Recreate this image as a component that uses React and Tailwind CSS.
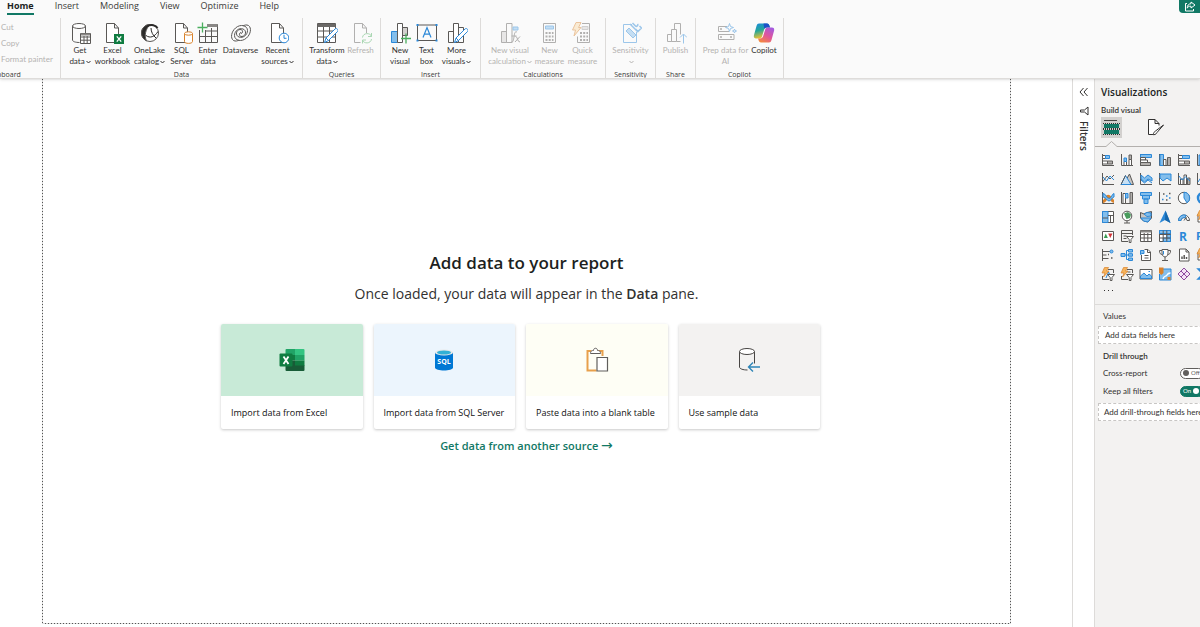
import React from "react";

const INK = "#5a5856";
const BLUE = "#2b88d8";
const SKY = "#83beec";
const GREEN = "#4aae5e";
const ORANGE = "#d9822b";

function Svg({ size = 22, children, className = "" }) {
  return (
    <svg
      width={size}
      height={size}
      viewBox={`0 0 ${size} ${size}`}
      fill="none"
      stroke={INK}
      strokeWidth="1"
      aria-hidden="true"
      className={`shrink-0 ${className}`}
    >
      {children}
    </svg>
  );
}

function Chevron() {
  return (
    <svg width="5" height="4" viewBox="0 0 5 4" fill="none" stroke="currentColor" aria-hidden="true" className="ml-px inline-block">
      <path d="M0.5 1l2 2 2-2" />
    </svg>
  );
}

const Doc = () => <path d="M4.5 1.500h8l4 4.500v14.500h-12zM12.500 1.500v4.500h4" fill="#fff" />;

const Pencil = () => (
  <g>
    <path d="M8.500 20.500l1.500-4.500 9-9c1.500-1.500 4 1 2.500 2.500l-9 9z" fill="#fff" stroke={BLUE} />
    <path d="M10 16l2.500 2.500" stroke={BLUE} />
  </g>
);

const icons = {
  getData: (
    <Svg>
      <path d="M3.500 4v14c0 1.500 3 2.500 7 2.500M16.500 4v7" fill="none" />
      <ellipse cx="10" cy="4" rx="6.500" ry="2.500" fill="#fff" />
      <path d="M11.500 11.500h10v10h-10zM11.500 15h10M11.500 18.200h10M15 14v7.500M18.200 14v7.500" fill="#fff" />
      <path d="M12 12.500h9" strokeWidth="2" stroke="#8a8886" />
    </Svg>
  ),
  excel: (
    <Svg>
      <Doc />
      <rect x="12" y="12" width="10" height="10" fill="#107c41" stroke="none" />
      <path d="M14.800 14.300l4.400 5.400M19.200 14.300l-4.400 5.400" stroke="#fff" strokeWidth="1.300" />
    </Svg>
  ),
  oneLake: (
    <Svg>
      <circle cx="11" cy="11" r="8.500" fill="#fff" />
      <path d="M11 2.500c-5 0-8.500 4-8.500 8.500 0 3.500 2 6.500 5 7.800C5 14 6.500 7 11 2.500z" fill="#2b2a29" />
      <path d="M8 4.500c4-2.500 9-1.500 10.500 1.500" strokeWidth="2" stroke="#2b2a29" />
      <path d="M7 13.500c4 3 8.500 1.500 12-4M12 6c0 4 2 7.500 5 10" stroke="#2b2a29" />
    </Svg>
  ),
  sql: (
    <Svg>
      <Doc />
      <path d="M13.500 11.500v8c0 2.500 8 2.500 8 0v-8" fill="#fff" stroke={ORANGE} />
      <ellipse cx="17.500" cy="11.500" rx="4" ry="1.700" fill="#fff" stroke={ORANGE} />
    </Svg>
  ),
  enter: (
    <Svg>
      <path d="M2.500 8v12.500h18v-18h-10M2.500 14.500h18M8.500 8v12.500M14.500 6v14.500M8 9h12.500" />
      <path d="M10 3.500h10.500" strokeWidth="3" stroke="#8a8886" />
      <path d="M5.500 0.500v10M0.500 5.500h10" stroke={GREEN} strokeWidth="1.300" />
    </Svg>
  ),
  dataverse: (
    <Svg>
      <path d="M18.500 3.500c3.500 2.500 2 9-2 12.500-5 4.500-12 2.500-12-2.500 0-4.500 4.500-8 8.500-6.500 4 1.500 3 7-1 7.500-3 .3-3.500-3.500-1-4" />
      <path d="M3.500 18.500C0 16 1.500 9.500 5.500 6c5-4.500 12-2.500 12 2.500 0 4.500-4.500 8-8.500 6.500-4-1.500-3-7 1-7.500 3-.3 3.500 3.500 1 4" />
      <path d="M3.500 18.500c2 1 4 .5 5.500-.5M18.500 3.500c-2-1-4-.5-5.500.5" />
    </Svg>
  ),
  recent: (
    <Svg>
      <Doc />
      <circle cx="17" cy="16" r="4.800" fill="#fff" stroke={BLUE} />
      <path d="M17 12.800v3.500h2.500" stroke={BLUE} />
    </Svg>
  ),
  transform: (
    <Svg>
      <path d="M1.500 1.500h18v19h-18zM1.500 9h18M1.500 15h18M7.500 5v15.500M13.500 5v15.500" fill="#fff" />
      <path d="M1.500 3.500h18" strokeWidth="3" stroke="#6b6967" />
      <Pencil />
    </Svg>
  ),
  refresh: (
    <Svg>
      <path d="M4.500 1.500h8l4 4.500v5M12.500 1.500v4.500h4M4.500 1.500v19h6" />
      <path d="M12.500 15.500c.5-5 8-5 9-1M21.500 11v3.500h-3.500M21.500 17c-.5 5-8 5-9 1M12.500 21.500v-3.500h3.500" stroke={GREEN} />
    </Svg>
  ),
  newVisual: (
    <Svg>
      <path d="M2.500 9.500h6v11h-6z" fill={SKY} stroke={BLUE} />
      <path d="M13.500 5.500h5v8h-5z" fill="#d2d0ce" />
      <path d="M8.500 1.500h5v19h-5z" fill="#fff" />
      <path d="M17 11.500v10M12 16.500h10" stroke={GREEN} strokeWidth="1.300" />
    </Svg>
  ),
  textBox: (
    <Svg>
      <path d="M1.500 3h19v15.500h-19z" />
      <path d="M7 15.500L11 5.500l4 10M8.500 12.200h5" stroke={BLUE} strokeWidth="1.200" />
      <path d="M0.500 2h2v2h-2zM19.500 2h2v2h-2zM0.500 17.500h2v2h-2zM19.500 17.500h2v2h-2z" fill={BLUE} stroke="none" />
    </Svg>
  ),
  moreVisuals: (
    <Svg>
      <path d="M2.500 9.500h5v11h-5zM12.500 5.500h5v15h-5z" />
      <path d="M7.500 1.500h5v19h-5z" fill="#fff" />
      <Pencil />
    </Svg>
  ),
  newCalc: (
    <Svg>
      <path d="M2.500 9.500h5v11h-5z" fill="#d2d0ce" />
      <path d="M7.500 1.500h5.500v19h-5.500z" />
      <path d="M14 5h5v3h-5z" fill={SKY} stroke={BLUE} />
      <path d="M18 10c-2.500-1-2.500 2-3 5s-1 6-3 5M12.500 14h5M16.500 14.500c2.500 0 1.500 5.500 4.500 5.500M21 14.500l-5 5.500" />
    </Svg>
  ),
  measure: (
    <Svg>
      <path d="M4.500 1.500h12v19h-12z" />
      <path d="M6.500 4h8v3h-8z" fill={SKY} stroke={BLUE} />
      <path d="M6.500 11h8M6.500 14.500h8M6.500 18h8" strokeDasharray="2 1.200" strokeWidth="2" />
    </Svg>
  ),
  quick: (
    <Svg>
      <path d="M10 1.500h7.500v19h-12v-6" />
      <path d="M10 4.500h6v3h-6z" fill="#d2d0ce" stroke="#a19f9d" />
      <path d="M8 11h8M8 14.500h8M8 18h8" strokeDasharray="2 1.200" strokeWidth="2" />
      <path d="M4 .5h5L6.500 5.500H9L2 14l1.500-6H.5z" fill="#fbd9a5" stroke={ORANGE} />
    </Svg>
  ),
  sensitivity: (
    <Svg>
      <path d="M12 2.500H3.500v18h13V10" stroke={BLUE} />
      <path d="M6 9l3-3 7 7-3 3z" fill={SKY} stroke={BLUE} />
      <path d="M10 2l8 8M12.500 1l3 3c1 1 3-.5 2-2M15.500 7l2.500 2.500 3.500-3.500-2-2" stroke={BLUE} strokeWidth="1.500" />
    </Svg>
  ),
  publish: (
    <Svg>
      <path d="M2.500 12.500h4v7h-4zM6.500 7.500h5v12h-5zM9.500 7.500v-6h6v11M11.500 19.500h4" />
      <path d="M18.500 21.500v-9M15 15.500l3.500-3.500 3.500 3.500" stroke={BLUE} />
    </Svg>
  ),
  prep: (
    <Svg>
      <path d="M12 4.500H3.500v5H14M3.500 12.500h15.500v5H3.500z" />
      <path d="M5 7h2M5 15h2M15 15h2" strokeWidth="1.500" />
      <path d="M14.500 1.500l1 3 3 1-3 1-1 3-1-3-3-1 3-1zM19.500 7l.5 1.500 1.500.5-1.500.5-.5 1.500-.5-1.500-1.500-.5 1.500-.5z" stroke={BLUE} />
    </Svg>
  ),
  copilot: (
    <Svg>
      <defs>
        <linearGradient id="cpA" x1="0" y1="0" x2="0.300" y2="1">
          <stop offset="0" stopColor="#1b8ae0" />
          <stop offset="0.500" stopColor="#23a69a" />
          <stop offset="1" stopColor="#f2c230" />
        </linearGradient>
        <linearGradient id="cpB" x1="0.800" y1="0" x2="0.200" y2="1">
          <stop offset="0" stopColor="#a35be0" />
          <stop offset="0.500" stopColor="#e0559b" />
          <stop offset="1" stopColor="#f58a3c" />
        </linearGradient>
      </defs>
      <path d="M6 1.500h8c1.500 0 2 1 2.500 2.500l.5 1.500h-3c-2 0-2.500 1-3 2.500l-2 6.500c-.5 1.500-1.200 2-3 2H3c-2 0-2.500-1.500-2-3.500L3.500 4C4 2.300 4.700 1.500 6 1.500z" fill="url(#cpA)" stroke="none" />
      <path d="M10.500 1.500H14c1.500 0 2 1 2.500 2.500l.5 1.500h-3c-1.500 0-2.200.5-2.700 1.500z" fill="#1c50c8" stroke="none" />
      <path d="M16 20.500H8c-1.500 0-2-1-2.500-2.500L5 16.500h2c2 0 2.700-1 3.200-2.500l2-6.500c.5-1.500 1.200-2 3-2H19c2 0 2.500 1.500 2 3.500L18.500 18c-.5 1.700-1.200 2.500-2.500 2.500z" fill="url(#cpB)" stroke="none" />
    </Svg>
  ),
};

const groups = [
  {
    name: "Data",
    pad: "pl-[5px] pr-[7px]",
    items: [
      ["getData", ["Get", "data"], "w-7", true],
      ["excel", ["Excel", "workbook"], "w-[37px]"],
      ["oneLake", ["OneLake", "catalog"], "w-[37px]", true],
      ["sql", ["SQL", "Server"], "w-[27px]"],
      ["enter", ["Enter", "data"], "w-[26px]"],
      ["dataverse", ["Dataverse"], "w-[39px]"],
      ["recent", ["Recent", "sources"], "w-[35px]", true],
    ],
  },
  {
    name: "Queries",
    pad: "pl-[6px] pr-[4px]",
    items: [
      ["transform", ["Transform", "data"], "w-9", true],
      ["refresh", ["Refresh"], "w-[31px]", false, true],
    ],
  },
  {
    name: "Insert",
    pad: "pl-[6px] pr-[7px]",
    items: [
      ["newVisual", ["New", "visual"], "w-[26px]"],
      ["textBox", ["Text", "box"], "w-[27px]"],
      ["moreVisuals", ["More", "visuals"], "w-[33px]", true],
    ],
  },
  {
    name: "Calculations",
    pad: "px-[6px]",
    items: [
      ["newCalc", ["New visual", "calculation"], "w-[46px]", true, true],
      ["measure", ["New", "measure"], "w-[33px]", false, true],
      ["quick", ["Quick", "measure"], "w-[33px]", false, true],
    ],
  },
  { name: "Sensitivity", pad: "px-[6px]", items: [["sensitivity", ["Sensitivity", ""], "w-[37px]", true, true]] },
  { name: "Share", pad: "px-[6px]", items: [["publish", ["Publish"], "w-[27px]", false, true]] },
  {
    name: "Copilot",
    pad: "px-[5px]",
    items: [
      ["prep", ["Prep data for", "AI"], "w-[49px]", false, true],
      ["copilot", ["Copilot"], "w-7"],
    ],
  },
];

function RibbonButton({ item }) {
  const [icon, lines, width, menu, off] = item;
  return (
    <button type="button" disabled={off} className={`flex flex-col items-center ${width} ${off ? "text-[#b5b3b1]" : "text-[#323130]"}`}>
      <span className={`mb-px ${off ? "opacity-45" : ""}`}>{icons[icon]}</span>
      {lines.map((line, i) => (
        <span key={i} className="h-[11px] font-[Lato,sans-serif] text-[8px] leading-[11px] whitespace-nowrap">
          {line}
          {menu && i === lines.length - 1 && <Chevron />}
        </span>
      ))}
    </button>
  );
}

function Ribbon() {
  return (
    <header className="relative z-10 flex h-[79px] shrink-0 flex-col overflow-hidden border-b border-[#dedcda] bg-[#fafafa] shadow-sm">
      <div className="flex h-[18px] items-start">
        <nav className="flex gap-[21px] pl-[7px] text-[9px] leading-[12px] text-[#3b3a39]">
          {["Home", "Insert", "Modeling", "View", "Optimize", "Help"].map((tab, i) => (
            <a
              key={tab}
              href={`#${tab.toLowerCase()}`}
              className={i === 0 ? "border-b-2 border-[#117865] pb-px font-bold text-[#201f1e]" : ""}
            >
              {tab}
            </a>
          ))}
        </nav>
        <button type="button" aria-label="Share" className="ml-auto flex h-[13px] w-[21px] items-center justify-center rounded-bl-sm bg-[#117865]">
          <svg width="12" height="11" viewBox="0 0 12 11" fill="none" stroke="#fff" aria-hidden="true">
            <path d="M3 2.500H1.500v7.500h8V8M7 1l4 3-4 3V5.200C5 5 3.800 5.800 3.200 7.200 3.200 4.500 4.500 2.800 7 2.700z" />
          </svg>
        </button>
      </div>
      <div className="flex flex-1">
        <section className="-ml-[50px] flex w-[111px] flex-col border-r border-[#dddbd9]">
          <div className="flex flex-1 flex-col items-start pt-px pl-[51px] font-[Lato,sans-serif] text-[8px] leading-[16px] text-[#b5b3b1]">
            {["Cut", "Copy", "Format painter"].map((t) => (
              <button key={t} type="button" disabled className="whitespace-nowrap">
                {t}
              </button>
            ))}
          </div>
          <h2 className="text-center text-[7px] leading-[7px] text-[#3b3a39]">Clipboard</h2>
        </section>
        {groups.map((g) => (
          <section key={g.name} className="flex flex-col border-r border-[#dddbd9]">
            <div className={`flex flex-1 items-start pt-1 ${g.pad}`}>
              {g.items.map((item) => (
                <RibbonButton key={item[0]} item={item} />
              ))}
            </div>
            <h2 className="text-center text-[7px] leading-[7px] text-[#3b3a39]">{g.name}</h2>
          </section>
        ))}
      </div>
    </header>
  );
}

const cards = [
  {
    label: "Import data from Excel",
    tone: "bg-[#c8ead7]",
    icon: (
      <svg width="26" height="24" viewBox="0 0 26 24" aria-hidden="true">
        <path d="M7.500 1h9v11h-10V2a1 1 0 0 1 1-1z" fill="#21a366" />
        <path d="M16 1h8.500a1 1 0 0 1 1 1v5H16z" fill="#33c481" />
        <path d="M6.500 7H16v5.500H6.500z" fill="#107c41" />
        <path d="M16 7h9.500v5.500H16z" fill="#21a366" />
        <path d="M6.500 12.500H16V18H6.500z" fill="#185c37" />
        <path d="M16 12.500h9.500V18H16z" fill="#107c41" />
        <path d="M6.500 17.500h19V22a1 1 0 0 1-1 1h-17a1 1 0 0 1-1-1z" fill="#185c37" />
        <rect x="0.500" y="5.500" width="13" height="13" rx="1" fill="#107c41" />
        <path d="M4.500 8.500l5 7.500M9.500 8.500l-5 7.500" stroke="#fff" strokeWidth="1.800" />
      </svg>
    ),
  },
  {
    label: "Import data from SQL Server",
    tone: "bg-[#ecf5fd]",
    icon: (
      <svg width="20" height="22" viewBox="0 0 20 22" aria-hidden="true">
        <path d="M1 3.500v15c0 4 18 4 18 0v-15z" fill="#0078d4" />
        <ellipse cx="10" cy="3.500" rx="9" ry="3" fill="#e8e8e8" />
        <ellipse cx="10" cy="3.500" rx="7" ry="2" fill="#32b0d5" />
        <text x="10" y="14.500" textAnchor="middle" fontSize="7" fontWeight="700" fill="#fff">
          SQL
        </text>
      </svg>
    ),
  },
  {
    label: "Paste data into a blank table",
    tone: "bg-[#fefef5]",
    icon: (
      <svg width="24" height="26" viewBox="0 0 24 26" fill="none" aria-hidden="true">
        <path d="M6.500 4H2.500v19.500h9M13 4h4.500v5" stroke="#e8a04c" strokeWidth="2" />
        <path d="M5.500 6.500c0-3 2-3 3-3 0-3 4-3 4 0 1 0 3 0 3 3z" fill="#fff" stroke="#605e5c" />
        <path d="M12 10.500h10.500v13.500H12z" fill="#fff" stroke="#605e5c" strokeWidth="1.200" />
      </svg>
    ),
  },
  {
    label: "Use sample data",
    tone: "bg-[#f3f2f1]",
    icon: (
      <svg width="24" height="26" viewBox="0 0 24 26" fill="none" stroke="#484644" aria-hidden="true">
        <path d="M2.500 4.500v15.500c0 1.800 3.500 3 8 3M17.500 4.500v12" fill="none" />
        <ellipse cx="10" cy="4.500" rx="7.500" ry="3" fill="#fff" />
        <path d="M23 20H11.500M16 15.500L11.500 20l4.500 4.500" stroke="#2f86b8" strokeWidth="1.400" />
      </svg>
    ),
  },
];

function Canvas() {
  return (
    <main className="flex min-w-0 flex-1 pr-[61px] pb-[3px] pl-[42px]">
      <div className="flex flex-1 flex-col items-center justify-center bg-[repeating-linear-gradient(to_bottom,#555_0_1px,#ddd_1px_3px),repeating-linear-gradient(to_bottom,#555_0_1px,#ddd_1px_3px),repeating-linear-gradient(to_right,#555_0_1px,#ddd_1px_3px)] bg-[length:1px_100%,1px_100%,100%_1px] bg-[position:left_top,right_top,left_bottom] bg-no-repeat pt-[2px]">
        <h1 className="text-[17px] leading-[24px] font-semibold text-[#201f1e]">Add data to your report</h1>
        <p className="mt-[9px] text-[14px] leading-[20px] text-[#323130]">
          Once loaded, your data will appear in the <strong className="font-semibold">Data</strong> pane.
        </p>
        <div className="mt-[20px] grid w-full max-w-[611px] grid-cols-4 gap-[11px] pr-[12px]">
          {cards.map((c) => (
            <button key={c.label} type="button" className="overflow-hidden rounded-xs bg-white text-left shadow-[0_1px_3px_rgba(0,0,0,0.22)]">
              <span className={`flex h-[72px] items-center justify-center ${c.tone}`}>{c.icon}</span>
              <span className="block px-[10px] text-[9px] leading-[33px] font-medium whitespace-nowrap text-[#111]">{c.label}</span>
            </button>
          ))}
        </div>
        <a href="#sources" className="mt-[9px] text-[11px] leading-[16px] font-semibold text-[#117865]">
          Get data from another source <span className="font-['DejaVu_Sans',sans-serif] text-[14px] leading-none font-normal">→</span>
        </a>
      </div>
    </main>
  );
}

const Axes = () => <path d="M1.500 1v11.500H13" />;
const Bolt = () => <path d="M3.500.5h4L5.500 4H8L2.500 10 4 6H1z" fill="#f7b45c" stroke={ORANGE} strokeWidth="0.700" />;
const bar = { fill: SKY, stroke: BLUE };
const grayBar = { fill: "#b3b0ad", stroke: "#605e5c" };
const Funnel = () => <path d="M6.500 7.500h7L11 10.500v3H9.200v-3z" fill="#fff" />;

const visuals = [
  ["Stacked bar chart", <><Axes /><path d="M1.500 2.500h3v3h-3zM1.500 8h5v3h-5z" fill="#fff" /><path d="M4.500 2.500h4v3h-4z" {...bar} /><path d="M6.500 8h5v3h-5z" {...grayBar} /></>],
  ["Stacked column chart", <><Axes /><path d="M4 8.500h2.500v4H4zM9 6.500h2.500v6H9z" fill="#fff" /><path d="M4 5h2.500v3.500H4z" {...bar} /><path d="M9 2h2.500v4.500H9z" {...grayBar} /></>],
  ["Clustered bar chart", <><path d="M1.500 1v12" /><path d="M1.500 1.500h11v3h-11z" {...bar} /><path d="M1.500 4.500h5v2.500h-5z" fill="#fff" /><path d="M1.500 7h7v2.500h-7z" fill="#fff" /><path d="M1.500 9.500h10v3h-10z" {...grayBar} /></>],
  ["Clustered column chart", <><Axes /><path d="M2 1.500h3.500v11H2z" {...bar} /><path d="M5.500 6.500H8v6H5.500z" fill="#fff" /><path d="M9.500 4.500h3v8h-3z" {...grayBar} /></>],
  ["100% stacked bar chart", <><Axes /><path d="M1.500 2.500h4v3h-4zM1.500 8h6v3h-6z" fill="#fff" /><path d="M5.500 2.500h7v3h-7z" {...bar} /><path d="M7.500 8h5v3h-5z" {...grayBar} /></>],
  ["100% stacked column chart", <><Axes /><path d="M3 2h3v10H3z" {...bar} /><path d="M9 2h3v10H9z" {...grayBar} /></>],
  ["Line chart", <><Axes /><path d="M1.500 10l4.500-6 3 3 4-4" /><path d="M2 5l3.500 4L9 4l4 4" stroke={BLUE} /></>],
  ["Area chart", <><path d="M6 12.500h7.500L9.500 2 6 8z" fill="#c8c6c4" /><path d="M1 12.500L5.500 3.500 11 12.500z" fill="#c7e0f4" stroke={BLUE} /><path d="M1 12.500L5.500 3.500" /></>],
  ["Stacked area chart", <><Axes /><path d="M2 3l3.500 3L9 3l4 3v3L9 7l-3.500 3L2 7z" {...bar} /><path d="M2 8l3.500 3L9 8l4 3" stroke={BLUE} /></>],
  ["100% stacked area chart", <><Axes /><path d="M2 2h11v7L9 6l-4 3-3-3z" {...bar} /></>],
  ["Line and stacked column chart", <><Axes /><path d="M3.500 7H6v5.500H3.500z" fill="#fff" /><path d="M7 3h2.500v9.500H7z" fill="#fff" /><path d="M10.500 6H13v6.500h-2.500z" {...grayBar} /><path d="M2 4l3 4 3.500-3 4.500 4" stroke={BLUE} /></>],
  ["Line and clustered column chart", <><Axes /><path d="M2 10l4-6 4 5" stroke={BLUE} /></>],
  ["Ribbon chart", <><Axes /><path d="M2 10.500c3 0 3.500-6.500 6-5s3 5 5 5" stroke={ORANGE} strokeWidth="3" /><path d="M2 2.500c3 0 3.500 5 6 5s3-5 5-5v3.500c-2 0-3 4-5 4s-3-4-6-4z" {...bar} /></>],
  ["Waterfall chart", <><Axes /><path d="M3 2.500h2.500v10H3z" fill="#fff" /><path d="M5.500 2.500H8V7H5.500z" {...bar} /><path d="M10 1.500h2.500v11H10z" {...grayBar} /></>],
  ["Funnel chart", <><path d="M1.500 1.500h11v3h-11zM3.500 4.500h7v3.500h-7zM5 8h4v4.500H5z" {...bar} /></>],
  ["Scatter chart", <><Axes /><path d="M5 3h1.500M11 2.500h1.500M8 9h1.500" strokeWidth="1.500" /><path d="M4 8.500h1.500M8 5h1.500M11 7h1.500" stroke={BLUE} strokeWidth="1.500" /></>],
  ["Pie chart", <><circle cx="7" cy="7" r="5.700" fill="#fff" /><path d="M7 1.300A5.700 5.700 0 0 1 10 11.800L7 7z" {...bar} /></>],
  ["Donut chart", <><circle cx="7" cy="7" r="5" stroke={BLUE} strokeWidth="2.500" /></>],
  ["Treemap", <><path d="M1.500 1.500h11v11h-11z" fill="#fff" /><path d="M1.500 1.500H7v11H1.500z" {...bar} /><path d="M1.500 8H7M7 5.500h5.500M9.500 5.500v7" /></>],
  ["Map", <><circle cx="7" cy="6" r="4.800" fill="#fff" /><path d="M4 3.500L8 2l3 2.500-1 3.500-3.500 1-1.500-3z" fill="#4a9c5d" stroke="none" /><path d="M7 11v2M4 13h6" /></>],
  ["Filled map", <><path d="M1.500 2.500L5 4l3-1.500 4.500-1V8L9 12 4.500 11 1.500 8z" fill="#c8c6c4" /><path d="M2 8h10L9 12l-4.500-1zM5 4l3-1.500 4 .5v3L8 6.500z" {...bar} /></>],
  ["Azure map", <><path d="M7.500.5l5 12.500-5.500-3-5.500 3z" fill={BLUE} stroke="none" /><path d="M7.500.5L7 10l5.500 3z" fill="#1666ab" stroke="none" /></>],
  ["Gauge", <><path d="M1.500 10.500a5.500 5.500 0 0 1 11 0H10a3 3 0 0 0-6 0z" fill="#fff" /><path d="M1.500 10.500A5.500 5.500 0 0 1 9 5.300L8 7.700a3 3 0 0 0-4 2.800z" {...bar} /><path d="M7 10.500L9.500 7" /></>],
  ["Card (new)", <><path d="M2 4h11v8H2z" fill="#fff" /><Bolt /></>],
  ["Multi-row card", <><path d="M1.500 2.500h11v9h-11z" fill="#fff" /><path d="M2.800 9l2-4.500 2 4.500z" fill="#3a9a52" stroke="none" /><path d="M7.200 4.500h4.300L9.300 9z" fill="#d13438" stroke="none" /></>],
  ["Slicer", <><path d="M8 12.500H1.500v-11h11V6M1.500 4.500h11M3.500 7h3M3.500 9.500h3" /><Funnel /></>],
  ["Table", <><path d="M1.500 1.500h11v11h-11zM1.500 5.500h11M1.500 9h11M5.200 4v8.500M8.800 4v8.500" fill="#fff" /><path d="M1.500 2.500h11" strokeWidth="2" stroke="#8a8886" /></>],
  ["Matrix", <><path d="M1.500 1.500h11v11h-11z" fill="#fff" /><path d="M5.200 9h7.300v3.500H5.200zM1.500 1.500h11v3h-11z" {...bar} /><path d="M8.800 5.500h3.700V9H8.800z" {...bar} /><path d="M1.500 5.500h11M1.500 9h11M5.200 1.500v11M8.800 1.500v11" /></>],
  ["R script visual", <text x="6" y="11.500" textAnchor="middle" fontSize="12" fontWeight="700" fill={BLUE} stroke="none">R</text>],
  ["Python visual", <text x="0" y="11" fontSize="11" fontWeight="700" fill={BLUE} stroke="none">Py</text>],
  ["Key influencers", <><path d="M1.500 1v12M1.500 3.500H9M1.500 7h4M1.500 10.500h6" /><circle cx="10.500" cy="3.500" r="1.500" {...bar} /><path d="M7 6.500h1M10 10h1.500" strokeWidth="1.500" /></>],
  ["Decomposition tree", <><path d="M4.500 7H9M6.500 2.500v9M6.500 2.500H9M6.500 11.500H9" stroke={BLUE} /><path d="M1 5.500h4v3H1zM8.500 1.500h4v2.500h-4zM8.500 5.700h4v2.500h-4zM8.500 10h4v2.500h-4z" {...bar} /></>],
  ["Q&A", <><path d="M2.500 7v5.500h9V4L9 1.500H5.500M8.500 1.500v3h3" fill="#fff" /><path d="M5.500 7.500h4M5.500 10h4" /><path d="M1.500 2.500h3.500v3h-2l-1.500 1z" {...bar} /></>],
  ["Smart narrative", <><path d="M4 1.500h6V5c0 2.500-1 3.500-3 4-2-.5-3-1.500-3-4zM4 2.500H1.500c0 3 1 4 3 4M10 2.500h2.500c0 3-1 4-3 4M7 9v3M4 12.500h6" fill="#fff" /><path d="M5.500 3v3.500" stroke={BLUE} /></>],
  ["Paginated report", <><path d="M2.500 1h6.500l3 3v9h-9.500zM9 1v3h3" fill="#fff" /><path d="M5 11V8.500M7.200 11V7M9.500 11V9" strokeWidth="1.500" /></>],
  ["Power Apps", <><path d="M2 4h11v8H2z" fill="#fff" /><Bolt /></>],
  ["Text slicer", <><path d="M7 2.500h5.500V6M1.500 9v3.500H8" /><path d="M5 11L7.500 5l1.500 3" stroke={BLUE} /><Bolt /><Funnel /></>],
  ["List slicer", <><path d="M7 2.500h5.500V6M1.500 9v3.500H8M7.500 5h3" /><Bolt /><Funnel /></>],
  ["Image", <><path d="M1 2.500h12v9.500H1z" fill="#fff" /><path d="M1.500 11.500V9L5 6l3 3 2-2 2.500 2v2.500z" {...bar} /><path d="M9.500 4.500h1.500" stroke={BLUE} /></>],
  ["ArcGIS map", <><path d="M4 2h9v11H1.500V7" {...bar} /><path d="M5 12c1-4 3-2 4-4s2-2 3.500-2" stroke="#fff" strokeWidth="1.500" /><path d="M1 .5h4.500V6L3.200 8 1 6z" fill={ORANGE} stroke="none" /><path d="M9.500 10h3v3h-3z" fill={ORANGE} stroke="none" /></>],
  ["Power Automate", <><path d="M7 1l6 6-6 6-6-6z" fill="#f3e2f7" stroke="#8c4a9e" /><path d="M4 4l6 6M10 4l-6 6" stroke="#8c4a9e" /></>],
  ["Flow visual", <path d="M9 2H2l5 5-5 5h7" stroke={BLUE} strokeWidth="1.500" />],
];

function Toggle({ label, on }) {
  return (
    <label className="flex items-center text-[8px] leading-[18px] text-[#323130]">
      <span className="w-[77px] shrink-0 pr-1">{label}</span>
      <input type="checkbox" role="switch" defaultChecked={on} className="peer sr-only" />
      <span
        className={`flex h-[11px] w-[24px] shrink-0 items-center gap-[2px] rounded-full border px-[2px] text-[6px] leading-none ${
          on ? "border-[#117865] bg-[#117865] text-white" : "flex-row-reverse justify-end border-[#605e5c] bg-white text-[#605e5c]"
        }`}
      >
        {on ? "On" : "Off"}
        <span className={`size-[6px] shrink-0 rounded-full ${on ? "bg-white" : "bg-[#605e5c]"}`} />
      </span>
    </label>
  );
}

function SidePanes() {
  return (
    <div className="flex shrink-0">
      <aside className="flex w-[23px] flex-col items-center border-x border-[#dddbd9] bg-white pt-[8px]">
        <button type="button" aria-label="Expand filters">
          <svg width="10" height="10" viewBox="0 0 10 10" fill="none" stroke="#323130" aria-hidden="true">
            <path d="M4.500 1L1 5l3.500 4M8.500 1L5 5l3.500 4" />
          </svg>
        </button>
        <svg width="10" height="10" viewBox="0 0 10 10" fill="none" stroke="#323130" aria-hidden="true" className="mt-[9px]">
          <path d="M9 1v8L5.500 6H1.500V4h4z" />
        </svg>
        <h2 className="mt-[5px] text-[10px] leading-[14px] font-semibold text-[#323130] [writing-mode:vertical-rl]">Filters</h2>
      </aside>
      <aside className="w-[105px] overflow-hidden bg-[#f3f2f1] whitespace-nowrap text-[#323130]">
        <div className="pt-[6px] pl-[6px]">
          <h2 className="text-[10px] leading-[14px] font-semibold text-[#201f1e]">Visualizations</h2>
          <h3 className="mt-[5px] font-[Lato,sans-serif] text-[8px] leading-[12px] font-semibold">Build visual</h3>
          <div className="mt-px flex gap-[23px]">
            <button type="button" aria-label="Build visual" className="flex size-[21px] items-center justify-center bg-[#d2d0ce]">
              <svg width="17" height="17" viewBox="0 0 17 17" aria-hidden="true">
                <path d="M1 1.500h13" stroke="#484644" />
                <path d="M1 5h15v4H1zM1 11h15v4H1z" fill="#117865" />
                <path d="M0 4.500h17M0 9.500h17M0 10.500h17M0 15.500h17" stroke="#323130" strokeDasharray="1 1" />
              </svg>
            </button>
            <button type="button" aria-label="Format visual" className="flex size-[21px] items-center justify-center">
              <svg width="19" height="19" viewBox="0 0 19 19" fill="none" stroke="#323130" aria-hidden="true">
                <path d="M8 16.500H2.500v-15h6.500l4 4v2M9 1.500v4h4" fill="#fff" />
                <path d="M17.500 7L11 14.500c-1 2-2.500 2.500-4.500 2 1.500-1 1.500-3 3-3.500z" fill="#fff" />
              </svg>
            </button>
          </div>
        </div>
        <svg width="105" height="8" viewBox="0 0 105 8" fill="none" stroke="#b3b0ad" aria-hidden="true" className="mt-[2px] block">
          <path d="M0 6.500h11l5.500-5 5.500 5h83" />
        </svg>
        <div className="mt-[2px] grid w-[117px] grid-cols-6 pl-[3px]">
          {visuals.map(([name, art]) => (
            <button key={name} type="button" aria-label={name} className="flex h-[19px] w-[19px] items-center justify-center">
              <Svg size={14}>{art}</Svg>
            </button>
          ))}
        </div>
        <button type="button" aria-label="More visuals" className="ml-[9px] flex h-[14px] items-center gap-[3px]">
          <span className="size-px bg-[#323130]" />
          <span className="size-px bg-[#323130]" />
          <span className="size-px bg-[#323130]" />
        </button>
        <div className="mt-[7px] border-t border-[#dddbd9] pt-[5px] font-[Lato,sans-serif]">
          <h3 className="pl-[8px] text-[8px] leading-[12px]">Values</h3>
          <div className="mt-[4px] ml-[3px] w-[120px] border border-dashed border-[#c8c6c4] bg-white pl-[6px] text-[8px] leading-[16px]">Add data fields here</div>
          <h3 className="mt-[6px] pl-[8px] text-[8px] leading-[12px] font-semibold">Drill through</h3>
          <div className="mt-[2px] pl-[8px]">
            <Toggle label="Cross-report" />
            <Toggle label="Keep all filters" on />
          </div>
          <div className="mt-[3px] ml-[3px] w-[120px] border border-dashed border-[#c8c6c4] bg-white pl-[5px] text-[8px] leading-[16px]">Add drill-through fields here</div>
        </div>
      </aside>
    </div>
  );
}

export default function App() {
  return (
    <div className="flex min-h-screen flex-col overflow-hidden bg-white font-['Open_Sans','Noto_Sans',sans-serif]">
      <Ribbon />
      <div className="flex flex-1">
        <Canvas />
        <SidePanes />
      </div>
    </div>
  );
}
